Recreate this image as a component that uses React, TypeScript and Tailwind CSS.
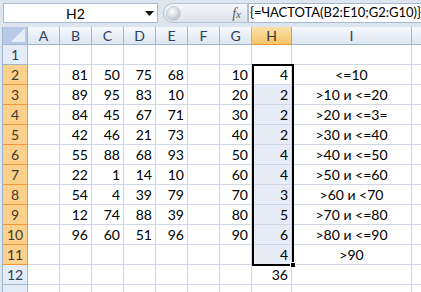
import React from 'react';

const FONT = { fontFamily: 'Lato, "Open Sans", "Liberation Sans", sans-serif' };

const COLS = ['A', 'B', 'C', 'D', 'E', 'F', 'G', 'H', 'I', 'J'];
const WIDTHS = ['w-[32px]', 'w-[32px]', 'w-[32px]', 'w-[32px]', 'w-[32px]', 'w-[32px]', 'w-[32px]', 'w-[40px]', 'w-[120px]', 'w-[64px]'];

// values per row: A..I (index 0..8)
const DATA: Record<number, (string | number)[]> = {
  2: ['', 81, 50, 75, 68, '', 10, 4, '<=10'],
  3: ['', 89, 95, 83, 10, '', 20, 2, '>10 и <=20'],
  4: ['', 84, 45, 67, 71, '', 30, 2, '>20 и <=3='],
  5: ['', 42, 46, 21, 73, '', 40, 2, '>30 и <=40'],
  6: ['', 55, 88, 68, 93, '', 50, 4, '>40 и <=50'],
  7: ['', 22, 1, 14, 10, '', 60, 4, '>50 и <=60'],
  8: ['', 54, 4, 39, 79, '', 70, 3, '>60 и <70'],
  9: ['', 12, 74, 88, 39, '', 80, 5, '>70 и <=80'],
  10: ['', 96, 60, 51, 96, '', 90, 6, '>80 и <=90'],
  11: ['', '', '', '', '', '', '', 4, '>90'],
  12: ['', '', '', '', '', '', '', 36, ''],
};

const isSel = (r: number) => r >= 2 && r <= 11;

function FormulaBar() {
  return (
    <div className="flex h-[27px] items-start pt-[3px]">
      <div className="flex h-[20px] w-[155px] shrink-0 items-center border border-[#a7bad0] bg-white">
        <span className="flex-1 pl-[2px] text-center text-[14px] text-black">H2</span>
        <svg width="9" height="5" viewBox="0 0 9 5" className="mr-[3px]">
          <path d="M0 0h9L4.5 5z" fill="#111" />
        </svg>
      </div>
      <div className="ml-[5px] flex h-[20px] w-[85px] shrink-0 items-center rounded-l-full border border-[#b4c2d3] bg-gradient-to-b from-[#f4f6f9] to-[#dde3ea]">
        <div className="ml-[2px] h-[15px] w-[15px] rounded-full border border-[#c9d0d8] bg-[radial-gradient(circle_at_40%_35%,#ffffff,#c2c7cd_70%,#9ea5ad)]" />
        <span
          className="ml-auto mr-[6px] text-[14px] italic text-[#555]"
          style={{ fontFamily: '"Liberation Serif", serif' }}
        >
          f<span className="text-[11px]">x</span>
        </span>
      </div>
      <div className="flex h-[20px] min-w-0 flex-1 items-center whitespace-nowrap border border-r-0 border-[#a7bad0] bg-white pl-[1px] text-[13px] text-black">
        {'{=ЧАСТОТА(B2:E10;G2:G10)}'}
      </div>
    </div>
  );
}

function ColumnHeader() {
  return (
    <div className="flex h-[18px]">
      <div className="relative w-[25px] shrink-0 border-r border-b border-[#9eb6ce] bg-[#b7cbe8]">
        <svg width="14" height="14" viewBox="0 0 14 14" className="absolute right-[2px] bottom-[2px]">
          <path d="M14 0V14H0z" fill="#e6edf7" />
        </svg>
      </div>
      {COLS.map((c, i) => (
        <div
          key={c}
          className={
            WIDTHS[i] +
            ' flex shrink-0 items-center justify-center border-r border-b text-[14px] ' +
            (c === 'H'
              ? 'border-[#f29536] bg-gradient-to-b from-[#fbe1a8] to-[#f5c46a] text-[#3d3a2e]'
              : 'border-[#9eb6ce] bg-gradient-to-b from-[#f7f9fc] to-[#dde5f1] text-[#27415f]')
          }
        >
          {c === 'J' ? '' : c}
        </div>
      ))}
    </div>
  );
}

function Row({ n }: { n: number }) {
  const vals = DATA[n] || [];
  return (
    <div className="flex h-[20px]">
      <div
        className={
          'flex w-[25px] shrink-0 items-center justify-center border-r border-b text-[14px] ' +
          (isSel(n)
            ? 'border-[#f29536] bg-[#fbd08a] text-[#3d3a2e]'
            : 'border-[#9eb6ce] bg-[#e4ecf7] text-[#27415f]')
        }
      >
        {n < 13 ? n : ''}
      </div>
      {COLS.map((c, i) => {
        const v = vals[i] ?? '';
        const sel = c === 'H' && isSel(n) && n !== 2;
        return (
          <div
            key={c}
            className={
              WIDTHS[i] +
              ' flex shrink-0 items-center border-r border-b border-[#d0d7e5] text-[14px] text-black ' +
              (c === 'I' ? 'justify-center ' : 'justify-end pr-[3px] ') +
              (sel ? 'bg-[#e8ecf6]' : 'bg-white')
            }
          >
            {v}
          </div>
        );
      })}
    </div>
  );
}

export default function App() {
  const rows = [1, 2, 3, 4, 5, 6, 7, 8, 9, 10, 11, 12, 13];
  return (
    <div className="h-[292px] w-[421px] overflow-hidden bg-[#dde5ef] pl-[3px]" style={FONT}>
      <FormulaBar />
      <div className="relative -ml-px border-l border-[#9eb6ce]">
        <ColumnHeader />
        {rows.map((n) => (
          <Row key={n} n={n} />
        ))}
        {/* selection outline H2:H11 */}
        <div className="pointer-events-none absolute left-[249px] top-[37px] h-[202px] w-[42px] border-2 border-black">
          <div className="absolute -right-[4px] -bottom-[4px] h-[6px] w-[6px] border border-white bg-black" />
        </div>
      </div>
    </div>
  );
}
